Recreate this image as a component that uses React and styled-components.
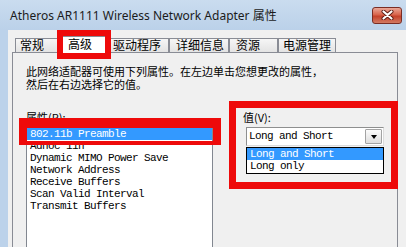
import React from "react";
import styled, { createGlobalStyle } from "styled-components";

const GlobalStyle = createGlobalStyle`
  html, body {
    margin: 0;
    padding: 0;
  }
  body {
    width: 406px;
    height: 247px;
    overflow: hidden;
    background: #f0f0f0;
  }
`;

const Window = styled.div`
  width: 406px;
  height: 247px;
  display: flex;
  flex-direction: column;
  overflow: hidden;
  font-family: "Noto Sans CJK SC", sans-serif;
  color: #000;
`;

const TitleBar = styled.div`
  flex: none;
  height: 30px;
  display: flex;
  align-items: center;
  padding: 0 4px 0 10px;
  background: linear-gradient(#cadcef, #bbd1e9);
`;

const Title = styled.div`
  font-family: "Noto Sans", "Noto Sans CJK SC", sans-serif;
  font-size: 12px;
  color: #1b1b1b;
`;

const CloseButton = styled.div`
  margin-left: auto;
  width: 30px;
  height: 17px;
  box-sizing: border-box;
  border: 1px solid #7a2d24;
  border-radius: 3px;
  background: linear-gradient(#eaa898, #d8634b 45%, #c5412a 55%, #d27a62);
  display: flex;
  align-items: center;
  justify-content: center;
`;

const Body = styled.div`
  flex: 1;
  display: flex;
  min-height: 0;
`;

const Frame = styled.div`
  width: 8px;
  flex: none;
  background: #bcd2ea;
`;

const Client = styled.div`
  flex: 1;
  display: flex;
  flex-direction: column;
  padding: 6px 9px 0 4px;
  background: #f0f0f0;
`;

const TabStrip = styled.div`
  height: 16px;
  display: flex;
  align-items: flex-end;
  padding-left: 3px;
  position: relative;
  z-index: 1;
`;

const Tab = styled.div`
  position: relative;
  box-sizing: border-box;
  width: ${(p) => p.$w}px;
  height: ${(p) => (p.$active ? 17 : 14)}px;
  margin-bottom: ${(p) => (p.$active ? -1 : 0)}px;
  padding-left: ${(p) => p.$pl}px;
  border: 1px solid #898c95;
  border-bottom: none;
  background: ${(p) => (p.$active ? "#fff" : "linear-gradient(#f6f6f6, #e3e3e3)")};
  font-size: 12px;
  line-height: ${(p) => (p.$active ? 14 : 12)}px;
  white-space: nowrap;
`;

const Panel = styled.div`
  flex: 1;
  border: 1px solid #898c95;
  border-bottom: none;
  background: #f0f0f0;
  padding: 12px 13px 0;
`;

const Description = styled.div`
  font-size: 11px;
  line-height: 13px;
`;

const Row = styled.div`
  display: flex;
  align-items: flex-start;
  gap: 30px;
  margin-top: 20px;
`;

const Column = styled.div`
  position: relative;
  width: ${(p) => p.$w}px;
  display: flex;
  flex-direction: column;
`;

const Label = styled.div`
  font-size: 11px;
  line-height: 12px;
  margin-bottom: 4px;
`;

const List = styled.div`
  position: relative;
  box-sizing: border-box;
  height: 140px;
  border: 1px solid #828790;
  background: #fff;
`;

const Item = styled.div`
  height: 12px;
  padding-left: 3px;
  font-family: "Liberation Mono", monospace;
  font-size: 11px;
  letter-spacing: -0.6px;
  line-height: 12px;
  white-space: nowrap;
  background: ${(p) => (p.$selected ? "#3399ff" : "transparent")};
  color: ${(p) => (p.$selected ? "#fff" : "#000")};
`;

const Combo = styled.div`
  box-sizing: border-box;
  margin-left: 3px;
  height: 19px;
  display: flex;
  align-items: center;
  border: 1px solid #8e8f8f;
  border-right-color: #dcdcdc;
  border-bottom-color: #dcdcdc;
  background: #fff;
  padding: 0 1px 0 2px;
`;

const ComboText = styled.div`
  flex: 1;
  font-family: "Liberation Mono", monospace;
  font-size: 11px;
  letter-spacing: -0.6px;
  line-height: 15px;
`;

const DropButton = styled.div`
  box-sizing: border-box;
  width: 17px;
  height: 15px;
  border: 1px solid #a3a3a3;
  border-radius: 1px;
  background: linear-gradient(#fbfbfb, #dedede);
  display: flex;
  align-items: center;
  justify-content: center;

  &::after {
    content: "";
    border-left: 3.5px solid transparent;
    border-right: 3.5px solid transparent;
    border-top: 4px solid #000;
  }
`;

const Dropdown = styled.div`
  box-sizing: border-box;
  margin: 1px 0 0 3px;
  border: 1px solid #000;
  background: #fff;
  padding-bottom: 1px;
`;

const RedFrame = styled.div`
  position: absolute;
  box-sizing: border-box;
  top: ${(p) => p.$t}px;
  left: ${(p) => p.$l}px;
  right: ${(p) => p.$r}px;
  ${(p) => (p.$h ? `height: ${p.$h}px;` : `bottom: ${p.$b}px;`)}
  border-style: solid;
  border-color: #ee0a0a;
  border-width: ${(p) => p.$bw};
  pointer-events: none;
  z-index: 5;
`;

const tabs = [
  { label: "常规", w: 43, pl: 4 },
  { label: "高级", w: 51, pl: 9, active: true },
  { label: "驱动程序", w: 60, pl: 3 },
  { label: "详细信息", w: 60, pl: 6 },
  { label: "资源", w: 49, pl: 6 },
  { label: "电源管理", w: 58, pl: 4 },
];

const properties = [
  "802.11b Preamble",
  "Adhoc 11n",
  "Dynamic MIMO Power Save",
  "Network Address",
  "Receive Buffers",
  "Scan Valid Interval",
  "Transmit Buffers",
];

export default function App() {
  return (
    <Window>
      <GlobalStyle />
      <TitleBar>
        <Title>Atheros AR1111 Wireless Network Adapter 属性</Title>
        <CloseButton>
          <svg width="13" height="10" viewBox="0 0 13 10">
            <path d="M2.5 1.5 L10.5 8.5 M10.5 1.5 L2.5 8.5" stroke="#5a1a12" strokeWidth="4" strokeLinecap="round" />
            <path d="M2.5 1.5 L10.5 8.5 M10.5 1.5 L2.5 8.5" stroke="#fff" strokeWidth="2.2" strokeLinecap="round" />
          </svg>
        </CloseButton>
      </TitleBar>
      <Body>
        <Frame />
        <Client>
          <TabStrip>
            {tabs.map((t) => (
              <Tab key={t.label} $w={t.w} $pl={t.pl} $active={t.active}>
                {t.label}
                {t.active && <RedFrame $t={-7} $l={-2} $r={-3} $b={-6} $bw="6px" />}
              </Tab>
            ))}
          </TabStrip>
          <Panel>
            <Description>
              此网络适配器可使用下列属性。在左边单击您想更改的属性，
              <br />
              然后在右边选择它的值。
            </Description>
            <Row>
              <Column $w={187}>
                <Label>属性(P):</Label>
                <List>
                  {properties.map((p, i) => (
                    <Item key={p} $selected={i === 0}>
                      {p}
                    </Item>
                  ))}
                  <RedFrame $t={-10} $l={-8} $r={-9} $h={27} $bw="10px 8px 4px 8px" />
                </List>
              </Column>
              <Column $w={141}>
                <Label>值(V):</Label>
                <Combo>
                  <ComboText>Long and Short</ComboText>
                  <DropButton />
                </Combo>
                <Dropdown>
                  <Item $selected>Long and Short</Item>
                  <Item>Long only</Item>
                </Dropdown>
                <RedFrame $t={-10} $l={-14} $r={-14} $b={-15} $bw="7px" />
              </Column>
            </Row>
          </Panel>
        </Client>
      </Body>
    </Window>
  );
}
